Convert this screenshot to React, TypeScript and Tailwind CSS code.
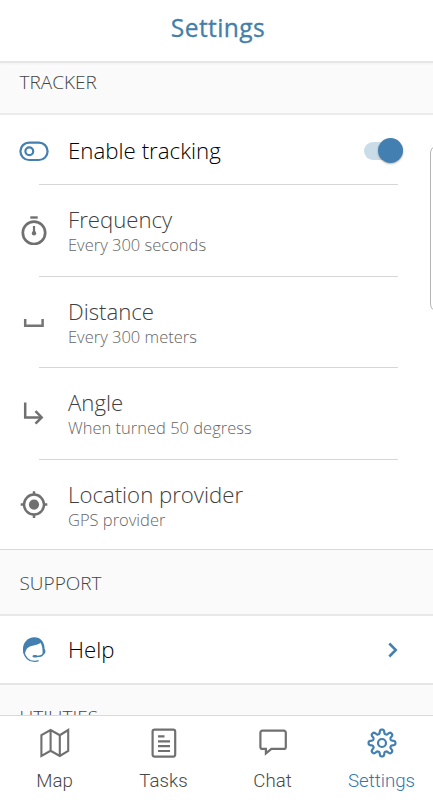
import type { ReactNode } from "react";
import { useState } from "react";

const GEAR_POINTS = Array.from({ length: 144 }, (_, i) => {
  const a = (i / 144) * Math.PI * 2;
  const r = 11.4 + 2.1 * Math.tanh(2 * Math.cos(8 * a));
  return `${(15 + r * Math.sin(a)).toFixed(2)},${(15 - r * Math.cos(a)).toFixed(2)}`;
}).join(" ");

const ToggleIcon = () => (
  <svg className="w-[30px] h-[30px]" viewBox="0 0 30 30" fill="none" stroke="#437fb0" strokeWidth="2.2">
    <rect x="1.4" y="6.6" width="27.2" height="17.4" rx="8.7" />
    <circle cx="10.3" cy="15.3" r="3.9" />
  </svg>
);

const StopwatchIcon = () => (
  <svg className="w-[30px] h-[30px]" viewBox="0 0 30 30" fill="none" stroke="#707070">
    <circle cx="15" cy="17.8" r="11.2" strokeWidth="2.7" />
    <path d="M11.3 2.5h7.4" strokeWidth="2.4" />
    <path d="M15 11v7" strokeWidth="2.2" />
    <circle cx="15" cy="18.2" r="2.2" fill="#707070" stroke="none" />
  </svg>
);

const DistanceIcon = () => (
  <svg className="w-[30px] h-[30px]" viewBox="0 0 30 30" fill="none" stroke="#757575" strokeWidth="2.5">
    <path d="M6.2 12v6.7h17.4V12" />
  </svg>
);

const AngleIcon = () => (
  <svg className="w-[30px] h-[30px]" viewBox="0 0 30 30" fill="none" stroke="#707070" strokeWidth="2.5">
    <path d="M6.2 4.4v15h16.4" />
    <path d="M16.5 13.2l6.2 6.2-6.2 6.2" />
  </svg>
);

const TargetIcon = () => (
  <svg className="w-[30px] h-[30px]" viewBox="0 0 30 30" fill="none" stroke="#707070" strokeWidth="2.5">
    <circle cx="15" cy="14.6" r="10" />
    <circle cx="15" cy="14.6" r="5.1" fill="#707070" stroke="none" />
    <path d="M15 1.3v3.3M15 24.6v3.3M1.7 14.6H5M25 14.6h3.3" />
  </svg>
);

const SupportIcon = () => (
  <svg className="w-[30px] h-[30px]" viewBox="0 0 30 30">
    <path
      d="M5.6 20.6C3.2 17 3.3 9.5 7 5.9C11 1.3 19.5 1.1 23 5.7C25 8.2 25.5 11 25.6 14C26.8 15 26.8 18 25.1 19.2H23.6C23.7 15 23.4 10.5 21.6 7.7C18 10.9 11 9.9 8 13.5C6.4 15.6 6.2 18 5.6 20.6Z"
      fill="#437fb0"
    />
    <path
      d="M4.9 16.5c.6 6 5.2 9.9 10.5 9.9c1.6 0 3-.2 4.2-.7M24.4 18.5c-.6 2.4-3 3.2-7.9 3"
      fill="none"
      stroke="#437fb0"
      strokeWidth="1.4"
    />
    <ellipse cx="15.9" cy="21.2" rx="2.5" ry="1.2" fill="#437fb0" />
  </svg>
);

const MapIcon = () => (
  <svg className="w-[30px] h-[30px]" viewBox="0 0 30 30" fill="none" stroke="#707070" strokeWidth="2.1">
    <path d="M1.4 7.2L10.6 2l9.2 5.2L28.2 2v20.8L19.8 28 10.6 22.8l-9.2 5.2zM10.6 2v20.8M19.8 7.2V28" />
  </svg>
);

const TasksIcon = () => (
  <svg className="w-[30px] h-[30px]" viewBox="0 0 30 30" fill="none" stroke="#707070" strokeWidth="2.2">
    <rect x="3.6" y="1.6" width="22.6" height="27" rx="2" />
    <path d="M9 8.4h6.5M9 13.3h12M9 18.2h12M9 23h12" />
  </svg>
);

const ChatIcon = () => (
  <svg className="w-[30px] h-[30px]" viewBox="0 0 30 30" fill="none" stroke="#707070" strokeWidth="2.2">
    <path d="M4.4 2.7h21.4a2 2 0 0 1 2 2v14.2a2 2 0 0 1-2 2H13.4L7.9 25.4V20.9H4.4a2 2 0 0 1-2-2V4.7a2 2 0 0 1 2-2z" />
  </svg>
);

const GearIcon = () => (
  <svg className="w-[30px] h-[30px]" viewBox="0 0 30 30" fill="none" stroke="#437fb0" strokeWidth="2.2" strokeLinejoin="round">
    <polygon points={GEAR_POINTS} />
    <circle cx="15" cy="15" r="4" />
  </svg>
);

const options = [
  { title: "Frequency", detail: "Every 300 seconds", icon: <StopwatchIcon /> },
  { title: "Distance", detail: "Every 300 meters", icon: <DistanceIcon /> },
  { title: "Angle", detail: "When turned 50 degress", icon: <AngleIcon /> },
  { title: "Location provider", detail: "GPS provider", icon: <TargetIcon /> },
];

const tabs = [
  { label: "Map", icon: <MapIcon /> },
  { label: "Tasks", icon: <TasksIcon /> },
  { label: "Chat", icon: <ChatIcon /> },
  { label: "Settings", icon: <GearIcon /> },
];

const OptionRow = ({ title, detail, icon }: { title: string; detail: string; icon: ReactNode }) => (
  <div className="h-[91.6px] shrink-0">
    <div className="ml-[39px] mr-[35px] h-px bg-[#d6d6d6]" />
    <div className="flex pl-[19px] pt-[21.2px]">
      <div className="pt-[9px]">{icon}</div>
      <div className="ml-[19px]">
        <div className="text-[22.2px] leading-[28px] font-light text-[#404040]">{title}</div>
        <div className="text-[16.5px] leading-[22.6px] font-light text-[#656565]">{detail}</div>
      </div>
    </div>
  </div>
);

const App = () => {
  const [tracking, setTracking] = useState(true);
  const [active, setActive] = useState("Settings");

  return (
    <div className="relative flex h-[800px] w-[433px] flex-col overflow-hidden bg-white font-['Open_Sans',sans-serif]">
      {/* Title bar */}
      <header className="z-10 flex h-[63px] shrink-0 justify-center border-b-2 border-[#e6e6e6] pt-3 pl-[3px] shadow-[0_1px_2px_rgba(0,0,0,0.04)]">
        <h1 className="text-[24.6px] leading-[31px] font-medium tracking-[0.4px] text-[#437fa8] [-webkit-text-stroke:0.3px_#437fa8]">
          Settings
        </h1>
      </header>

      <main className="flex min-h-0 flex-1 flex-col overflow-hidden">
        <div className="h-[52px] shrink-0 border-b-2 border-[#ebebeb] bg-[#fafafa] pl-[19.5px] pt-[6px] text-[19px] leading-[26px] font-light text-[#444]">
          TRACKER
        </div>

        <div className="flex h-[69px] shrink-0 items-center pl-[19px] pr-[30px] pt-[2px]">
          <ToggleIcon />
          <span className="ml-[19px] flex-1 text-[22.3px] leading-[28px] font-light text-black">Enable tracking</span>
          <button
            type="button"
            onClick={() => setTracking(!tracking)}
            className={`flex h-[18px] w-[39px] items-center rounded-full bg-[#cbdce9] ${tracking ? "justify-end" : "justify-start"}`}
          >
            <span className="h-[25px] w-[25px] shrink-0 rounded-full bg-[#437fb0] shadow-[0_1px_2px_rgba(0,0,0,0.3)]" />
          </button>
        </div>

        {/* Tracker options */}
        <div className="h-[365.2px] shrink-0">
          {options.map((option) => (
            <OptionRow key={option.title} {...option} />
          ))}
        </div>

        <div className="flex h-[66.8px] shrink-0 items-center border-t border-b-2 border-t-[#d9d9d9] border-b-[#e8e8e8] bg-[#fafafa] pl-[19.5px] pt-[2px] text-[19px] font-light text-[#444]">
          SUPPORT
        </div>

        <div className="flex h-[67px] shrink-0 items-center pl-[19px] pr-[34px] pt-[2px]">
          <SupportIcon />
          <span className="ml-[19px] flex-1 text-[22.2px] leading-[28px] font-light text-black">Help</span>
          <svg className="h-4 w-3" viewBox="0 0 12 16" fill="none" stroke="#437fb0" strokeWidth="2.5">
            <path d="M2.3 1.5L8.8 8 2.3 14.5" />
          </svg>
        </div>

        <div className="h-[60px] shrink-0 border-t-2 border-[#e6e6e6] bg-[#fafafa] pl-[19.5px] pt-[19px] text-[19px] leading-[26px] font-light text-[#444]">
          UTILITIES
        </div>
      </main>

      {/* Bottom navigation */}
      <nav className="grid h-[85px] w-[436px] shrink-0 grid-cols-4 border-t border-[#d9d9d9] bg-white font-[Roboto,sans-serif]">
        {tabs.map((tab) => (
          <button
            key={tab.label}
            type="button"
            onClick={() => setActive(tab.label)}
            className={`flex flex-col items-center pt-[11.5px] text-[18.7px] leading-[24px] font-[350] ${active === tab.label ? "text-[#3576aa]" : "text-[#484848]"}`}
          >
            {tab.icon}
            <span className="mt-[11px]">{tab.label}</span>
          </button>
        ))}
      </nav>

      {/* Edge panel handle */}
      <div className="absolute left-[430px] top-[145px] h-[167px] w-5 rounded-lg border border-[#b5b5b5]" />
    </div>
  );
};

export default App;
